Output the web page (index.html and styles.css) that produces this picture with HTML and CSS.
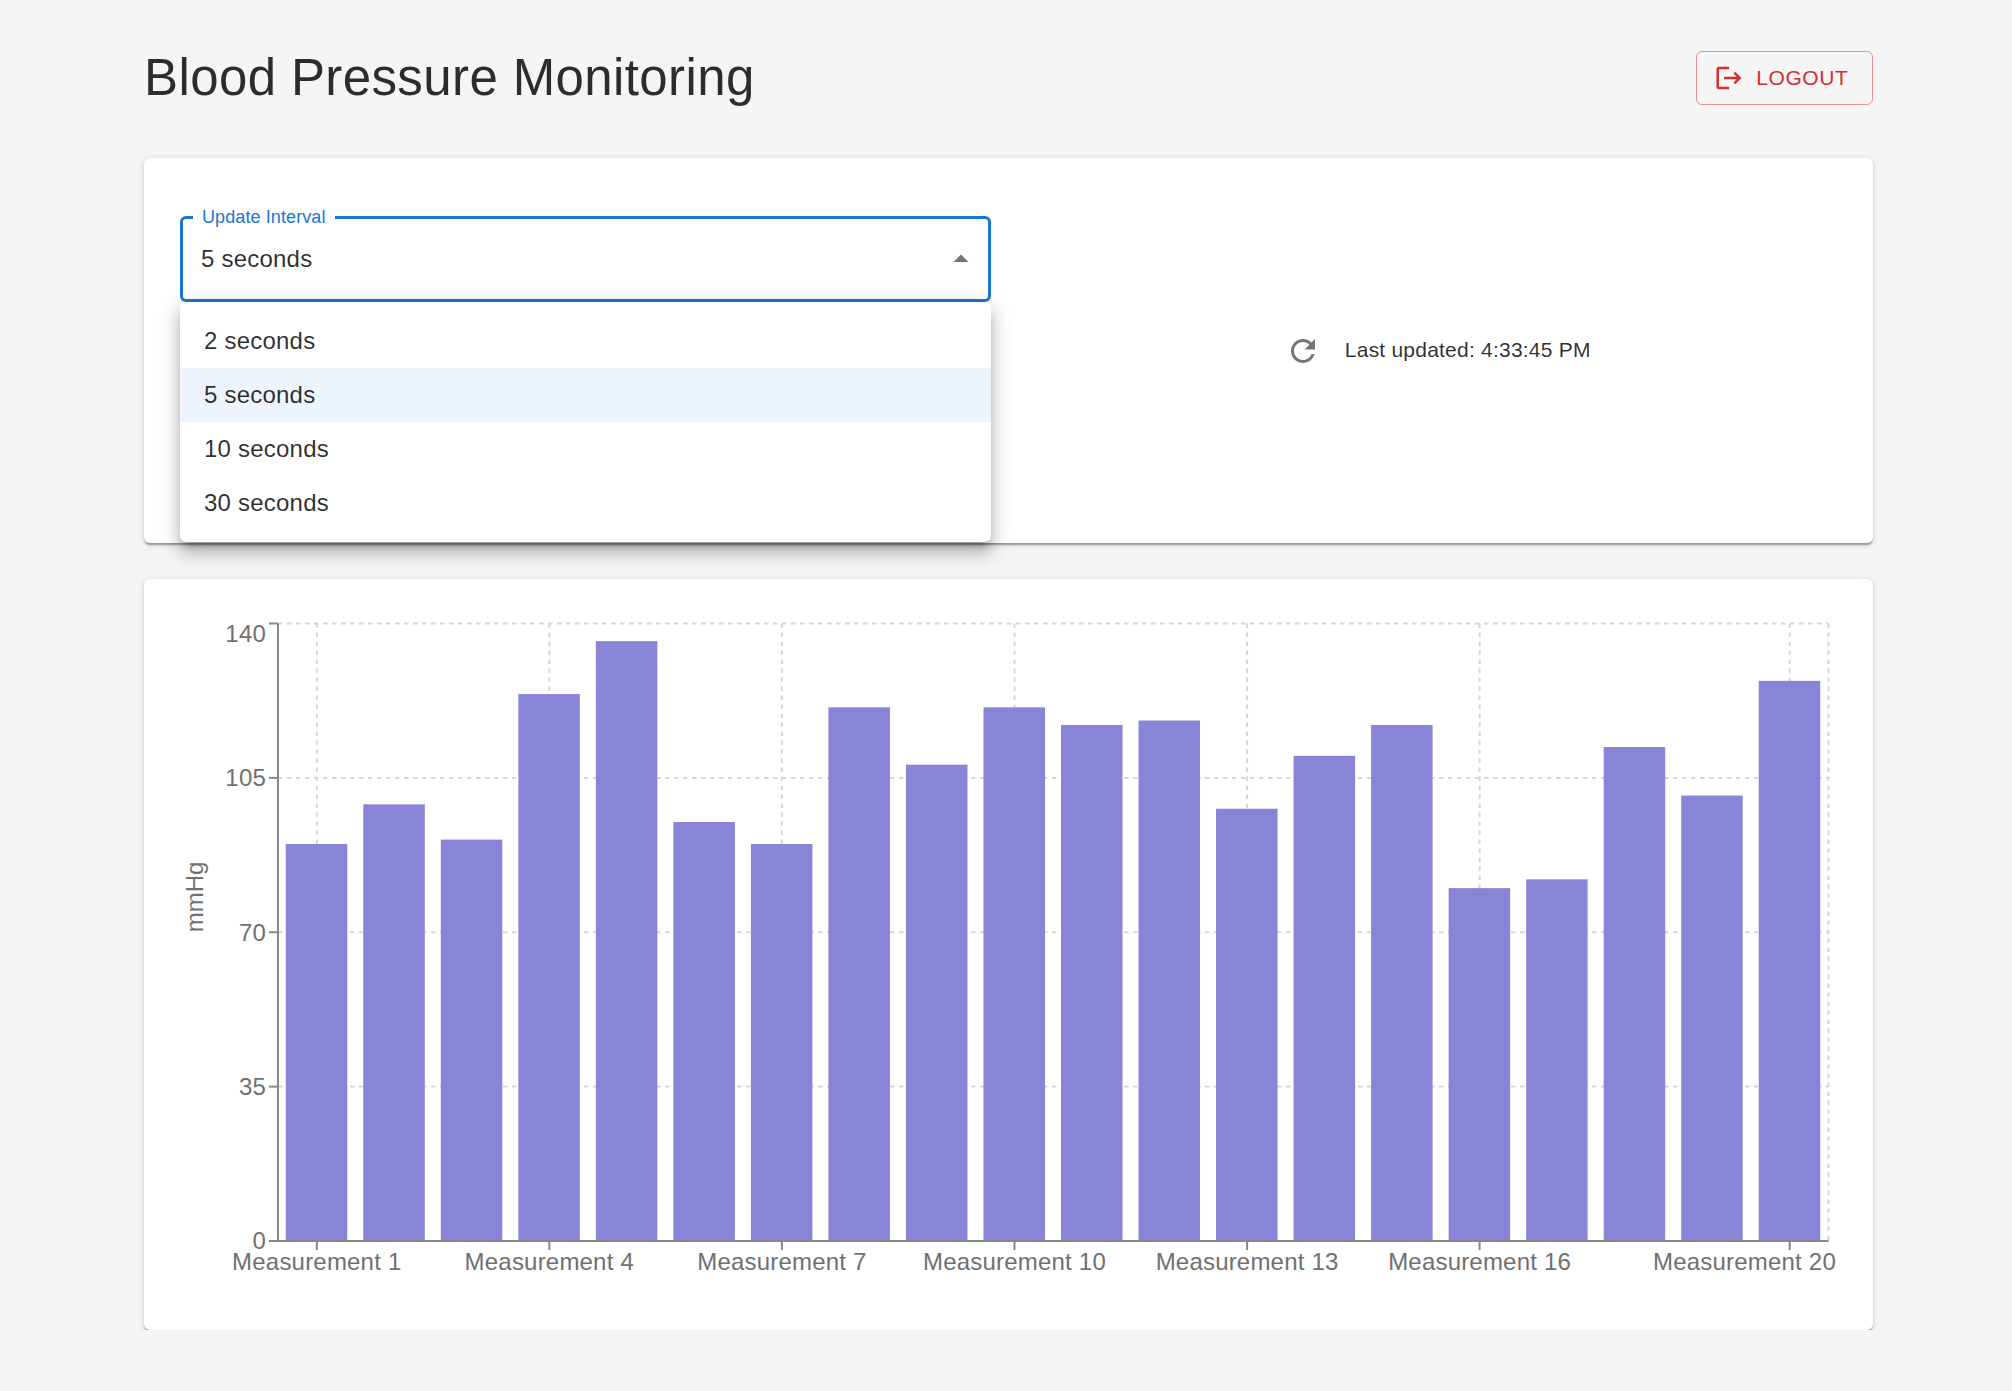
FILE: index.html
```html
<!DOCTYPE html>
<html lang="en">
<head>
    <meta charset="UTF-8">
    <meta name="viewport" content="width=device-width, initial-scale=1.0">
    <title>Blood Pressure Monitoring</title>
    <link rel="stylesheet" href="styles.css">
</head>
<body>
    <div class="page">
        <header class="top-bar">
            <h1>Blood Pressure Monitoring</h1>
            <button class="logout-btn" type="button">
                <svg class="logout-icon" viewBox="0 0 24 24"><path d="M17 7l-1.41 1.41L18.17 11H8v2h10.17l-2.58 2.58L17 17l5-5zM4 5h8V3H4c-1.1 0-2 .9-2 2v14c0 1.1.9 2 2 2h8v-2H4V5z"/></svg>
                Logout
            </button>
        </header>

        <section class="card controls">
            <div class="select-col">
                <div class="select-wrap">
                    <fieldset class="select-box">
                        <legend>Update Interval</legend>
                        <div class="select-row">
                            <span>5 seconds</span>
                            <svg class="arrow-icon" viewBox="0 0 24 24"><path d="M7 14l5-5 5 5z"/></svg>
                        </div>
                    </fieldset>
                    <ul class="menu">
                        <li>2 seconds</li>
                        <li class="selected">5 seconds</li>
                        <li>10 seconds</li>
                        <li>30 seconds</li>
                    </ul>
                </div>
            </div>
            <div class="status-col">
                <span class="refresh-btn">
                    <svg class="refresh-icon" viewBox="0 0 24 24"><path d="M17.65 6.35C16.2 4.9 14.35 4 12 4c-4.42 0-7.99 3.58-7.99 8s3.57 8 7.99 8c3.73 0 6.84-2.55 7.73-6h-2.08c-.82 2.33-3.04 4-5.65 4-3.31 0-6-2.69-6-6s2.69-6 6-6c1.66 0 3.14.69 4.22 1.78L13 11h7V4l-2.35 2.35z"/></svg>
                </span>
                <span class="last-updated">Last updated: 4:33:45 PM</span>
            </div>
        </section>

        <section class="card chart-card">
            <svg class="chart" viewBox="0 0 1656 678" width="1656" height="678">
                <g class="grid">
                    <line x1="98" y1="7.5" x2="1648.5" y2="7.5"/>
                    <line x1="98" y1="161.9" x2="1648.5" y2="161.9"/>
                    <line x1="98" y1="316.25" x2="1648.5" y2="316.25"/>
                    <line x1="98" y1="470.6" x2="1648.5" y2="470.6"/>
                    <line x1="98" y1="625" x2="1648.5" y2="625"/>
                    <line x1="136.8" y1="7.5" x2="136.8" y2="625"/>
                    <line x1="369.3" y1="7.5" x2="369.3" y2="625"/>
                    <line x1="601.9" y1="7.5" x2="601.9" y2="625"/>
                    <line x1="834.5" y1="7.5" x2="834.5" y2="625"/>
                    <line x1="1067.1" y1="7.5" x2="1067.1" y2="625"/>
                    <line x1="1299.6" y1="7.5" x2="1299.6" y2="625"/>
                    <line x1="1609.7" y1="7.5" x2="1609.7" y2="625"/>
                    <line x1="1648.5" y1="7.5" x2="1648.5" y2="625"/>
                </g>
                <g class="bars">
                    <rect x="105.75" y="228.04" width="61.5" height="396.96"/>
                    <rect x="183.28" y="188.34" width="61.5" height="436.66"/>
                    <rect x="260.8" y="223.62" width="61.5" height="401.38"/>
                    <rect x="338.33" y="78.07" width="61.5" height="546.93"/>
                    <rect x="415.85" y="25.14" width="61.5" height="599.86"/>
                    <rect x="493.38" y="205.98" width="61.5" height="419.02"/>
                    <rect x="570.9" y="228.04" width="61.5" height="396.96"/>
                    <rect x="648.43" y="91.3" width="61.5" height="533.7"/>
                    <rect x="725.95" y="148.64" width="61.5" height="476.36"/>
                    <rect x="803.48" y="91.3" width="61.5" height="533.7"/>
                    <rect x="881" y="108.95" width="61.5" height="516.05"/>
                    <rect x="958.53" y="104.54" width="61.5" height="520.46"/>
                    <rect x="1036.05" y="192.75" width="61.5" height="432.25"/>
                    <rect x="1113.58" y="139.82" width="61.5" height="485.18"/>
                    <rect x="1191.1" y="108.95" width="61.5" height="516.05"/>
                    <rect x="1268.63" y="272.14" width="61.5" height="352.86"/>
                    <rect x="1346.15" y="263.32" width="61.5" height="361.68"/>
                    <rect x="1423.68" y="131" width="61.5" height="494"/>
                    <rect x="1501.2" y="179.52" width="61.5" height="445.48"/>
                    <rect x="1578.73" y="64.84" width="61.5" height="560.16"/>
                </g>
                <g class="axis">
                    <line x1="98" y1="7.5" x2="98" y2="625"/>
                    <line x1="98" y1="625" x2="1648.5" y2="625"/>
                    <line x1="89" y1="7.5" x2="98" y2="7.5"/>
                    <line x1="89" y1="161.9" x2="98" y2="161.9"/>
                    <line x1="89" y1="316.25" x2="98" y2="316.25"/>
                    <line x1="89" y1="470.6" x2="98" y2="470.6"/>
                    <line x1="89" y1="625" x2="98" y2="625"/>
                    <line x1="136.8" y1="625" x2="136.8" y2="634"/>
                    <line x1="369.3" y1="625" x2="369.3" y2="634"/>
                    <line x1="601.9" y1="625" x2="601.9" y2="634"/>
                    <line x1="834.5" y1="625" x2="834.5" y2="634"/>
                    <line x1="1067.1" y1="625" x2="1067.1" y2="634"/>
                    <line x1="1299.6" y1="625" x2="1299.6" y2="634"/>
                    <line x1="1609.7" y1="625" x2="1609.7" y2="634"/>
                </g>
                <g class="y-ticks">
                    <text x="86" y="25.5">140</text>
                    <text x="86" y="170">105</text>
                    <text x="86" y="324.5">70</text>
                    <text x="86" y="479">35</text>
                    <text x="86" y="633">0</text>
                </g>
                <g class="x-ticks">
                    <text x="136.8" y="654">Measurement 1</text>
                    <text x="369.3" y="654">Measurement 4</text>
                    <text x="601.9" y="654">Measurement 7</text>
                    <text x="834.5" y="654">Measurement 10</text>
                    <text x="1067.1" y="654">Measurement 13</text>
                    <text x="1299.6" y="654">Measurement 16</text>
                    <text x="1564.5" y="654">Measurement 20</text>
                </g>
                <text class="y-label" transform="translate(23 281) rotate(-90)">mmHg</text>
            </svg>
        </section>
    </div>
</body>
</html>
```

FILE: styles.css
```css
body {
    font-family: 'Liberation Sans', Arial, sans-serif;
    margin: 0;
    padding: 0;
    background-color: #f5f5f5;
    color: rgba(0, 0, 0, 0.82);
}
.page {
    padding: 46px 139px 0 144px;
}
.top-bar {
    display: flex;
    justify-content: space-between;
    align-items: center;
    margin-bottom: 49px;
}
h1 {
    margin: 0;
    font-size: 51px;
    font-weight: 400;
    line-height: 63px;
    letter-spacing: 0.39px;
}
.logout-btn {
    display: flex;
    align-items: center;
    gap: 12px;
    height: 54px;
    padding: 0 23.5px 0 22.5px;
    font-family: inherit;
    font-size: 21px;
    font-weight: 400;
    letter-spacing: 0.6px;
    text-transform: uppercase;
    color: #d32f2f;
    background: none;
    border: 1.5px solid rgba(211, 47, 47, 0.5);
    border-radius: 6px;
}
.logout-icon {
    width: 30px;
    height: 30px;
    margin-left: -5px;
    fill: #d32f2f;
}
.card {
    background-color: white;
    border-radius: 6px;
    box-shadow: 0 3px 1.5px -1.5px rgba(0, 0, 0, 0.2), 0 1.5px 1.5px rgba(0, 0, 0, 0.14), 0 1.5px 6px rgba(0, 0, 0, 0.14);
}
.controls {
    display: grid;
    grid-template-columns: 1fr 1fr;
    column-gap: 36px;
    box-sizing: border-box;
    height: 385px;
    padding: 36px;
    margin-bottom: 36px;
}
.select-col {
    padding-top: 13px;
}
.select-wrap {
    position: relative;
}
.select-box {
    box-sizing: border-box;
    height: 94.5px;
    margin: 0;
    padding: 0 21px;
    border: 3px solid #1976d2;
    border-radius: 6px;
}
.select-box legend {
    padding: 0 9px;
    margin-left: -11px;
    font-size: 18px;
    line-height: 21px;
    letter-spacing: 0.1px;
    color: #1976d2;
}
.select-row {
    display: flex;
    justify-content: space-between;
    align-items: center;
    margin-right: -12px;
    margin-left: -3px;
    height: 62px;
    font-size: 24px;
    letter-spacing: 0.22px;
}
.arrow-icon {
    width: 36px;
    height: 36px;
    fill: rgba(0, 0, 0, 0.54);
}
.menu {
    position: absolute;
    left: 0;
    right: 0;
    top: 95px;
    margin: 0;
    padding: 12px 0;
    list-style: none;
    background-color: white;
    border-radius: 6px;
    box-shadow: 0 7.5px 7.5px -4.5px rgba(0, 0, 0, 0.3), 0 12px 15px 1.5px rgba(0, 0, 0, 0.14), 0 4.5px 21px 3px rgba(0, 0, 0, 0.12);
}
.menu li {
    height: 54px;
    padding: 0 24px;
    font-size: 24px;
    line-height: 53px;
    letter-spacing: 0.22px;
}
.menu li.selected {
    background-color: #edf4fb;
}
.status-col {
    display: flex;
    justify-content: center;
    align-items: center;
    gap: 12px;
}
.refresh-btn {
    display: flex;
    justify-content: center;
    align-items: center;
    width: 60px;
    height: 60px;
}
.refresh-icon {
    width: 36px;
    height: 36px;
    fill: rgba(0, 0, 0, 0.54);
}
.last-updated {
    padding-bottom: 2px;
    font-size: 21px;
    letter-spacing: 0.22px;
}
.chart-card {
    box-sizing: border-box;
    height: 751px;
    padding: 37px 36px 36px;
}
.chart {
    display: block;
    font-family: 'Liberation Sans', sans-serif;
    font-size: 24px;
}
.grid line {
    stroke: #d6d6d6;
    stroke-width: 2;
    stroke-dasharray: 4.5 4.5;
}
.bars rect {
    fill: #8884d8;
}
.axis line {
    stroke: #888;
    stroke-width: 2;
}
.y-ticks text {
    fill: #707070;
    text-anchor: end;
    letter-spacing: 0.2px;
}
.x-ticks text {
    fill: #707070;
    text-anchor: middle;
    letter-spacing: 0.2px;
}
.y-label {
    fill: #707070;
    text-anchor: middle;
}
```
